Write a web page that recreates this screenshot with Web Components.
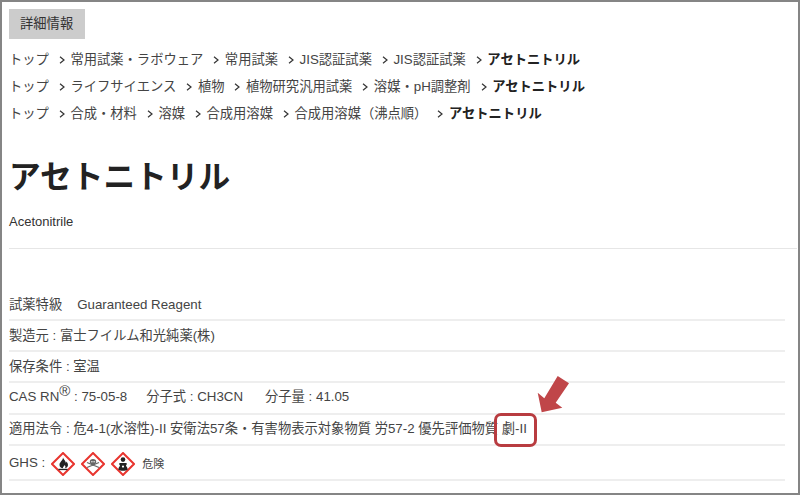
<!DOCTYPE html>
<html lang="ja">
<head>
<meta charset="utf-8">
<title>アセトニトリル</title>
<style>
html, body { margin: 0; padding: 0; background: #fff; }
body { font-family: "Liberation Sans", "Noto Sans CJK JP", sans-serif; color: #333; }
</style>
</head>
<body>
<x-page>
  <x-tag>詳細情報</x-tag>
  <x-crumbs>
    <x-crumb>トップ</x-crumb><x-crumb>常用試薬・ラボウェア</x-crumb><x-crumb>常用試薬</x-crumb><x-crumb>JIS認証試薬</x-crumb><x-crumb>JIS認証試薬</x-crumb><x-crumb current>アセトニトリル</x-crumb>
  </x-crumbs>
  <x-crumbs>
    <x-crumb>トップ</x-crumb><x-crumb>ライフサイエンス</x-crumb><x-crumb>植物</x-crumb><x-crumb>植物研究汎用試薬</x-crumb><x-crumb>溶媒・pH調整剤</x-crumb><x-crumb current>アセトニトリル</x-crumb>
  </x-crumbs>
  <x-crumbs>
    <x-crumb>トップ</x-crumb><x-crumb>合成・材料</x-crumb><x-crumb>溶媒</x-crumb><x-crumb>合成用溶媒</x-crumb><x-crumb>合成用溶媒（沸点順）</x-crumb><x-crumb current>アセトニトリル</x-crumb>
  </x-crumbs>
  <x-title sub="Acetonitrile">アセトニトリル</x-title>
  <x-specs>
    <x-row style="--h:31px;--lh:29px">試薬特級<span style="margin-left:15px">Guaranteed Reagent</span></x-row>
    <x-row style="--h:31px;--lh:29px">製造元 : 富士フイルム和光純薬(株)</x-row>
    <x-row style="--h:31px;--lh:29px">保存条件 : 室温</x-row>
    <x-row style="--h:32px;--lh:28px">CAS RN<sup style="font-size:15px;line-height:0;vertical-align:5px">®</sup> : 75-05-8<span style="margin-left:19px">分子式 : CH3CN</span><span style="margin-left:22px">分子量 : 41.05</span></x-row>
    <x-row style="--h:31px;--lh:27px">適用法令 : 危4-1(水溶性)-II 安衛法57条・有害物表示対象物質 労57-2 優先評価物質 劇-II</x-row>
    <x-row style="--h:35px;--lh:33px">GHS :<x-ghs kind="flame"></x-ghs><x-ghs kind="skull"></x-ghs><x-ghs kind="health"></x-ghs><span style="font-size:11px;margin-left:7px;vertical-align:-1px">危険</span></x-row>
  </x-specs>
  <x-callout></x-callout>
</x-page>

<script>
const base = `font-family: "Liberation Sans", "Noto Sans CJK JP", sans-serif;`

customElements.define("x-page", class extends HTMLElement {
  constructor() {
    super()
    this.attachShadow({ mode: "open" }).innerHTML = `
    <style>
      :host {
        display: block;
        position: relative;
        box-sizing: border-box;
        width: 800px;
        height: 495px;
        overflow: hidden;
        border: 2px solid #858585;
        padding: 7px 1px 0 7px;
        background: #fff;
        ${base}
      }
    </style>
    <slot></slot>`
  }
})

customElements.define("x-tag", class extends HTMLElement {
  constructor() {
    super()
    this.attachShadow({ mode: "open" }).innerHTML = `
    <style>
      :host {
        display: block;
        box-sizing: border-box;
        width: 76px;
        height: 30px;
        margin-bottom: 6px;
        padding-left: 11px;
        background: #ccc;
        color: #333;
        font-size: 13.3px;
        line-height: 30px;
      }
    </style>
    <slot></slot>`
  }
})

customElements.define("x-crumbs", class extends HTMLElement {
  constructor() {
    super()
    this.attachShadow({ mode: "open" }).innerHTML = `
    <style>
      :host {
        display: flex;
        height: 27px;
        align-items: center;
        white-space: nowrap;
      }
    </style>
    <slot></slot>`
  }
})

customElements.define("x-crumb", class extends HTMLElement {
  constructor() {
    super()
    const current = this.hasAttribute("current")
    this.attachShadow({ mode: "open" }).innerHTML = `
    <style>
      :host {
        display: inline-flex;
        align-items: center;
        font-size: 13.3px;
        color: #444;
      }
      :host([current]) { font-weight: bold; color: #222; }
      span { display: inline-block; }
      svg { display: block; margin: 2px 5.5px 0 10px; }
    </style>
    <span><slot></slot></span>
    ${current ? "" : `<svg width="6" height="8" viewBox="0 0 6 8"><path d="M1 .8 5 4 1 7.2" fill="none" stroke="#333" stroke-width="1.2"/></svg>`}`
  }
})

customElements.define("x-title", class extends HTMLElement {
  constructor() {
    super()
    this.attachShadow({ mode: "open" }).innerHTML = `
    <style>
      :host { display: block; }
      h1 {
        margin: 0;
        padding-top: 29px;
        font-size: 31.7px;
        line-height: 44px;
        font-weight: bold;
        color: #222;
      }
      p {
        margin: 0;
        padding-top: 14px;
        font-size: 13px;
        line-height: 18px;
        color: #333;
      }
      hr {
        border: 0;
        height: 1px;
        background: #e6e6e6;
        margin: 17px 0 0;
      }
    </style>
    <h1><slot></slot></h1>
    <p>${this.getAttribute("sub")}</p>
    <hr>`
  }
})

customElements.define("x-specs", class extends HTMLElement {
  constructor() {
    super()
    this.attachShadow({ mode: "open" }).innerHTML = `
    <style>
      :host {
        display: block;
        width: 776px;
        padding-top: 41px;
      }
    </style>
    <slot></slot>`
  }
})

customElements.define("x-row", class extends HTMLElement {
  constructor() {
    super()
    this.attachShadow({ mode: "open" }).innerHTML = `
    <style>
      :host {
        display: block;
        box-sizing: border-box;
        height: var(--h, 31px);
        line-height: var(--lh, 29px);
        border-bottom: 2px solid #eee;
        font-size: 13.3px;
        color: #444;
        white-space: nowrap;
      }
    </style>
    <slot></slot>`
  }
})

const ghsIcons = {
  flame: `<path d="M12 5.5c.4 2 2.6 3 2.8 5.2.5-.3.7-.8.7-1.300 1 1.200 1.500 2.400 1.500 3.600 0 1.900-1.500 3-3.300 3.200 1-.8 1-2 0-3.300-.3 1-1 1.200-1.500 2-.4.6-.4 1 0 1.300-2.300-.1-3.700-1.400-3.700-3.300 0-3 3.300-4 3.500-7.400z" fill="#222"/><rect x="7.500" y="16.800" width="9" height="1.300" fill="#222"/>`,
  skull: `<ellipse cx="12" cy="9.800" rx="3.200" ry="2.800" fill="#666"/><rect x="10.500" y="11.500" width="3" height="2" fill="#666"/><path d="M6 10.500 18 15.500M18 10.500 6 15.500" stroke="#666" stroke-width="1.300"/><circle cx="10.900" cy="9.800" r=".7" fill="#fff"/><circle cx="13.100" cy="9.800" r=".7" fill="#fff"/>`,
  health: `<circle cx="12" cy="7.600" r="2.300" fill="#222"/><path d="M8.500 11h7c.5 1 .2 2-.6 2.700.8 1 1.600 2 1.800 3.700-1 .9-2.800 1.300-4.700 1.300s-3.700-.4-4.700-1.300c.2-1.700 1-2.700 1.800-3.700-.8-.7-1.100-1.700-.6-2.700z" fill="#222"/><circle cx="12" cy="14.600" r="1.100" fill="#fff"/>`
}

customElements.define("x-ghs", class extends HTMLElement {
  constructor() {
    super()
    this.attachShadow({ mode: "open" }).innerHTML = `
    <style>
      :host { display: inline-block; vertical-align: middle; width: 24px; height: 24px; margin: 2px 0 0 6px; }
      svg { display: block; }
    </style>
    <svg width="24" height="24" viewBox="0 0 24 24">
      <path d="M12 1 23 12 12 23 1 12z" fill="#fff" stroke="#e8352f" stroke-width="2" stroke-linejoin="miter"/>
      ${ghsIcons[this.getAttribute("kind")]}
    </svg>`
  }
})

// red frame and arrow are annotations drawn over the page
customElements.define("x-callout", class extends HTMLElement {
  constructor() {
    super()
    this.attachShadow({ mode: "open" }).innerHTML = `
    <style>
      :host { position: absolute; left: 0; top: 0; display: block; }
      .box {
        position: absolute;
        left: 492px;
        top: 411px;
        width: 37px;
        height: 28px;
        border: 3px solid #b83c40;
        border-radius: 7px;
      }
      svg { position: absolute; left: 533px; top: 373px; }
    </style>
    <div class="box"></div>
    <svg width="40" height="42" viewBox="0 0 40 42">
      <path d="M22.700 1 34 8.300 20.700 27.700 27.300 32.700 6.700 37.300 2.700 17.700 9.300 23.300z" fill="#c04649"/>
    </svg>`
  }
})
</script>
</body>
</html>
